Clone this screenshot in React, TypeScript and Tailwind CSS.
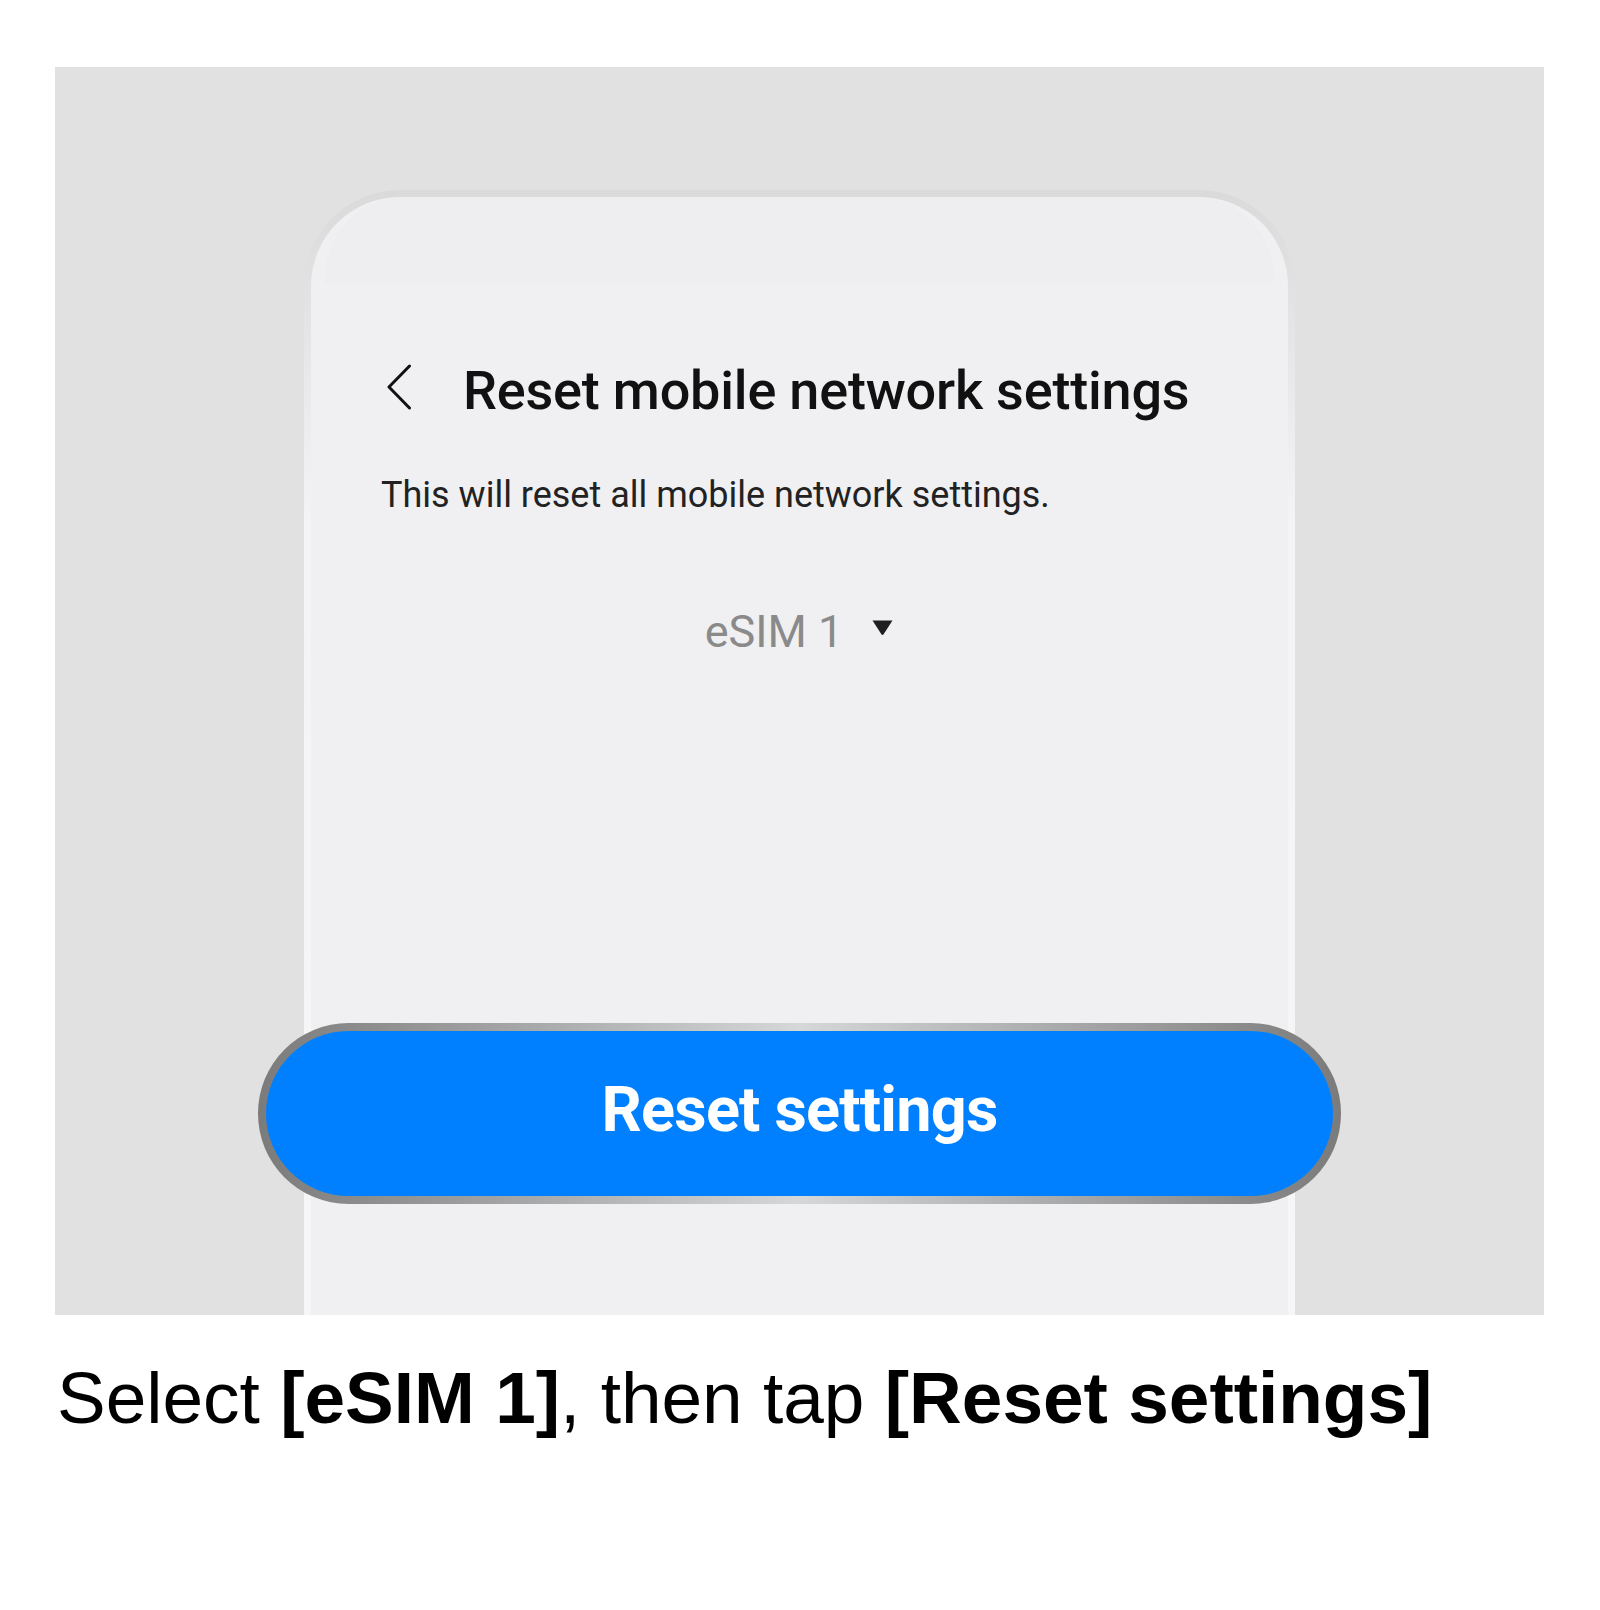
const ChevronLeft = () => (
  <svg width="26" height="46" viewBox="0 0 26 46" fill="none">
    <polyline
      points="23.5,2 3,23 23.5,44"
      stroke="#111111"
      strokeWidth="3"
      strokeLinecap="round"
      strokeLinejoin="round"
    />
  </svg>
);

const CaretDown = () => (
  <svg width="23" height="17" viewBox="0 0 23 17">
    <path d="M1.5 1.5 H21.5 L12.6 15.2 Q11.5 16.6 10.4 15.2 Z" fill="#1f1f1f" />
  </svg>
);

const Phone = () => {
  return (
    <div className="w-[991px] h-[1125px] rounded-t-[96px] bg-linear-to-b from-[#dadada] via-[#f4f4f4] via-30% to-[#f6f6f6] px-[7px] pt-[7px]">
      <div className="h-full rounded-t-[89px] bg-[#f0f0f2] flex flex-col">
        {/* status bar area */}
        <div className="h-[86px] mx-[14px] rounded-t-[80px] bg-[#eeeef0]" />

        {/* header */}
        <div className="mt-[81px] pl-[75px] flex items-start">
          <ChevronLeft />
          <h1 className="ml-[51px] mt-[0px] text-[54px] leading-none font-medium text-[#111111] tracking-[-0.2px] whitespace-nowrap">
            Reset mobile network settings
          </h1>
        </div>

        <p className="mt-[59px] pl-[70px] text-[36px] leading-none text-[#222222] whitespace-nowrap">
          This will reset all mobile network settings.
        </p>

        <div className="mt-[96px] flex justify-center items-start gap-[28px]">
          <span className="text-[45px] leading-none text-[#8a8a8a]">eSIM 1</span>
          <div className="mt-[10px]">
            <CaretDown />
          </div>
        </div>

        <div className="mt-[369px] -mx-[53px] h-[181px] rounded-full p-[8px] bg-linear-to-r from-[#7b7b7b] via-[#d5d7d9] to-[#7b7b7b]">
          <div className="h-full rounded-full bg-[#0080ff] flex items-center justify-center pb-[8px]">
            <span className="text-[63px] leading-none font-bold text-white tracking-[-0.8px]">
              Reset settings
            </span>
          </div>
        </div>
      </div>
    </div>
  );
};

export default function App() {
  return (
    <div className="w-[1600px] h-[1610px] bg-white font-['Roboto',sans-serif]">
      <div className="pt-[67px] pl-[55px]">
        <div className="w-[1489px] h-[1248px] bg-[#e1e1e1] pt-[123px] flex justify-center overflow-hidden">
          <Phone />
        </div>
      </div>
      <p className="mt-[46px] ml-[57px] text-[73px] leading-none text-black font-['Liberation_Sans',Arial,sans-serif] whitespace-nowrap">
        Select <b className="font-bold">[eSIM 1]</b>, then tap{" "}
        <b className="font-bold">[Reset settings]</b>
      </p>
    </div>
  );
}
